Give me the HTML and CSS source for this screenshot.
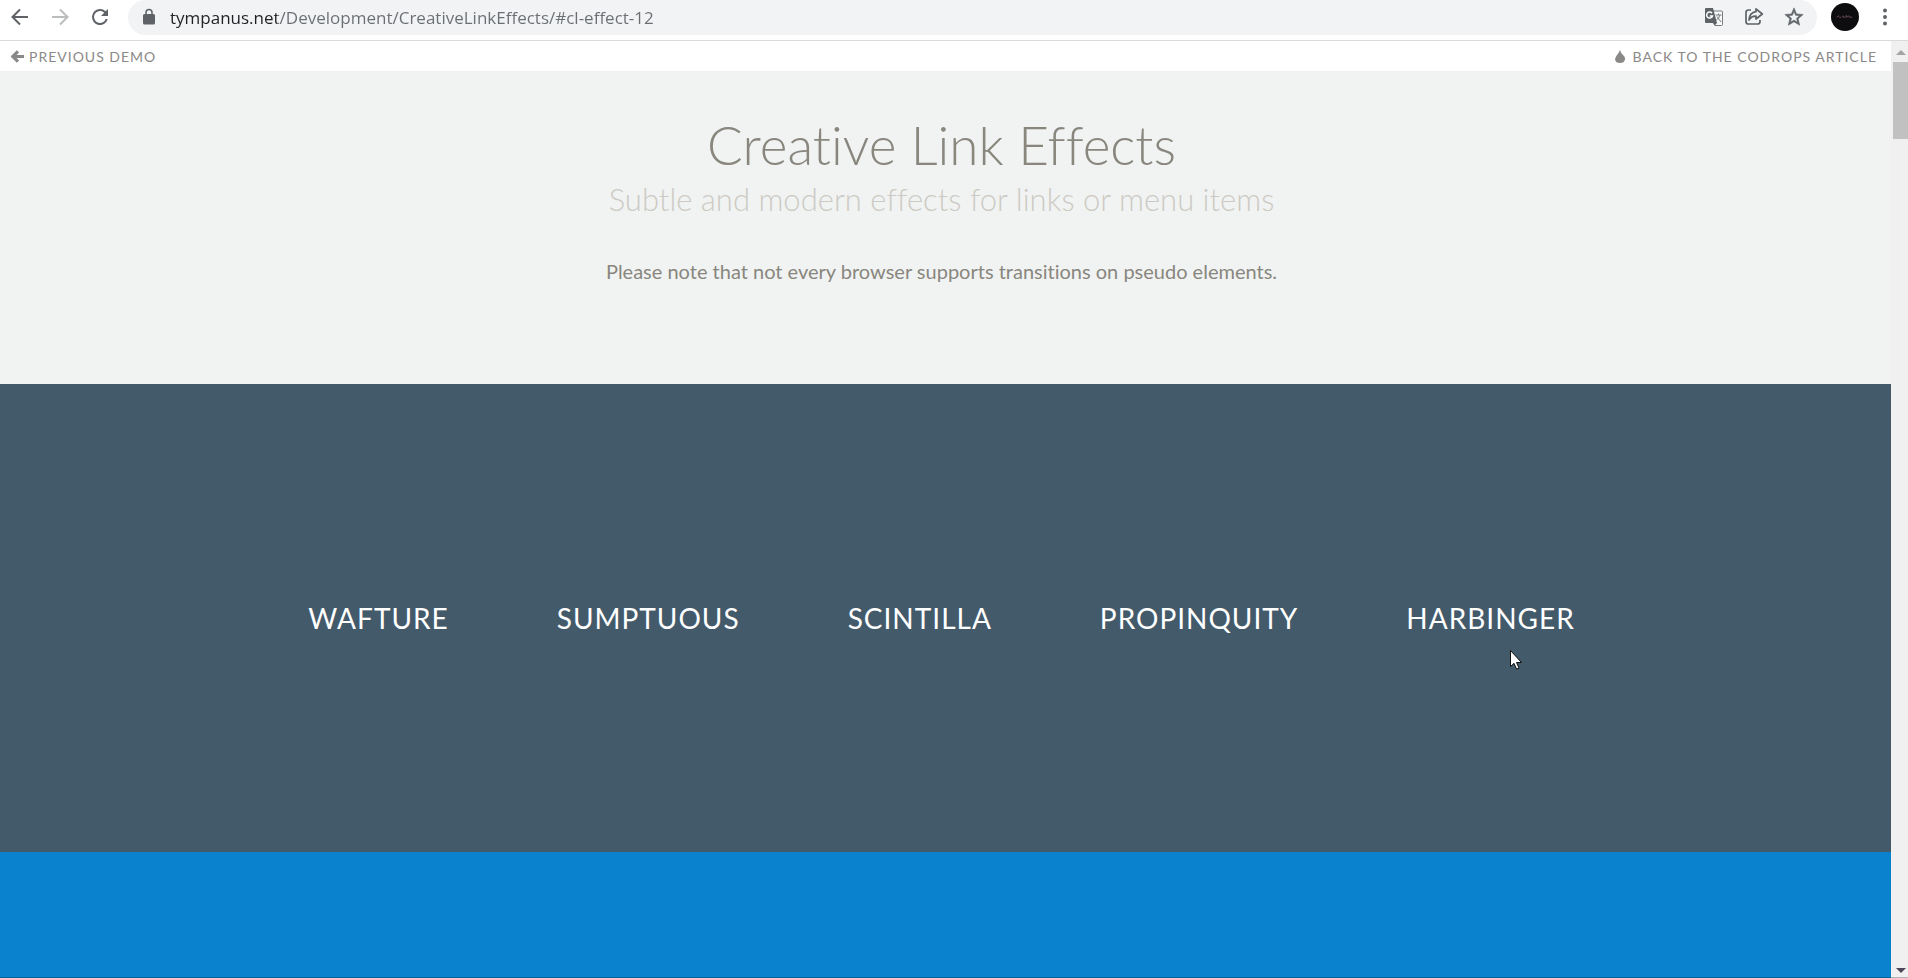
FILE: index.html
```html
<!DOCTYPE html>
<html lang="en">
<head>
    <meta charset="UTF-8">
    <meta name="viewport" content="width=device-width, initial-scale=1.0">
    <title>Creative Link Effects</title>
    <link rel="stylesheet" href="styles.css">
</head>
<body>

    <div class="toolbar">
        <button class="tool" aria-label="Back">
            <svg width="24" height="24" viewBox="0 0 24 24"><path d="M20 12H5M12 4.500L4.500 12l7.500 7.500" fill="none" stroke="#5f6368" stroke-width="2"/></svg>
        </button>
        <button class="tool" aria-label="Forward" disabled>
            <svg width="24" height="24" viewBox="0 0 24 24"><path d="M4 12h15M12 4.500l7.500 7.500-7.500 7.500" fill="none" stroke="#babcbe" stroke-width="2"/></svg>
        </button>
        <button class="tool" aria-label="Reload">
            <svg width="24" height="24" viewBox="0 0 24 24"><path d="M17.650 6.350A7.958 7.958 0 0 0 12 4a8 8 0 1 0 7.730 10h-2.080A6 6 0 1 1 12 6c1.660 0 3.140.690 4.220 1.780L13 11h7V4z" fill="#5f6368"/></svg>
        </button>
        <div class="address">
            <svg class="lock" width="18" height="18" viewBox="0 0 24 24"><path d="M18 8h-1V6A5 5 0 0 0 7 6v2H6a2 2 0 0 0-2 2v10a2 2 0 0 0 2 2h12a2 2 0 0 0 2-2V10a2 2 0 0 0-2-2zM9 6a3 3 0 0 1 6 0v2H9z" fill="#5f6368"/></svg>
            <input class="url" type="text" aria-label="Address" value="tympanus.net/Development/CreativeLinkEffects/#cl-effect-12">
            <button class="tool" aria-label="Translate this page">
                <svg width="20" height="20" viewBox="0 0 20 20">
                    <path d="M9 4h8.500q1 0 1 1v12.500q0 1-1 1H11l-2-3" fill="#f8f9fa" stroke="#777a7e"/>
                    <path d="M11.500 8h6M14.500 6.500V8M16 8q-.8 3-4 5.500M13 9.500l4 5.500" fill="none" stroke="#777a7e"/>
                    <path d="M2 1h7l4 15H2q-1 0-1-1V2q0-1 1-1z" fill="#5f6368"/>
                    <path d="M8 6.200A3 3 0 1 0 8.500 9H5.800" fill="none" stroke="#fff" stroke-width="1.500"/>
                    <path d="M9.500 16H13l-2.200 2.500z" fill="#5f6368"/>
                </svg>
            </button>
            <button class="tool" aria-label="Share this page">
                <svg width="20" height="20" viewBox="0 0 20 20"><path d="M7 3H4.500Q2 3 2 5.500v9Q2 17 4.500 17h9q2.500 0 2.500-2.500V13M12 1.800L18.300 7 12 12V9.200Q7.500 9 5 13q.5-7.500 7-8.300z" fill="none" stroke="#5f6368" stroke-width="1.700" stroke-linejoin="round"/></svg>
            </button>
            <button class="tool" aria-label="Bookmark this page">
                <svg width="22" height="22" viewBox="0 0 24 24"><path d="M22 9.240l-7.190-.620L12 2 9.190 8.630 2 9.240l5.460 4.730L5.820 21 12 17.270 18.180 21l-1.630-7.030zM12 15.400l-3.760 2.270 1-4.280-3.320-2.880 4.380-.380L12 6.100l1.710 4.040 4.380.380-3.320 2.880 1 4.280z" fill="#5f6368" stroke="#5f6368" stroke-width=".6"/></svg>
            </button>
        </div>
        <button class="avatar" aria-label="Profile">
            <svg width="28" height="28" viewBox="0 0 28 28"><circle cx="14" cy="14" r="14" fill="#0d0d0f"/><path d="M5.500 14.500q2-3 2.500-1t2 .5M11 14.500q1.500-3 1.500-1t2 .3l1-1.500.3 2 2-1.500.5 1.500 3-.3" fill="none" stroke="#765060" stroke-width=".8"/></svg>
        </button>
        <button class="tool menu" aria-label="Menu">
            <svg width="24" height="24" viewBox="0 0 24 24" fill="#5f6368"><circle cx="12" cy="5.500" r="2"/><circle cx="12" cy="12" r="2"/><circle cx="12" cy="18.500" r="2"/></svg>
        </button>
    </div>

    <div class="window">
        <div class="page">
            <div class="codrops-top">
                <a href="#previous">
                    <svg width="13" height="13" viewBox="0 0 13 13"><path d="M7 1.300L1.800 6.500 7 11.700M2.500 6.500H13" fill="none" stroke="#8b8987" stroke-width="3.200"/></svg>
                    Previous Demo
                </a>
                <a href="#article">
                    <svg width="10" height="13" viewBox="0 0 10 13"><path d="M5 0Q5.500 2.500 8 5t2 4.500Q9.200 13 5 13T0 9.500Q0 7.500 2 5t3-5z" fill="#8b8987"/></svg>
                    Back to the Codrops Article
                </a>
            </div>
            <header class="intro">
                <h1>Creative Link Effects</h1>
                <h2>Subtle and modern effects for links or menu items</h2>
                <p>Please note that not every browser supports transitions on pseudo elements.</p>
            </header>
            <section class="effects">
                <nav>
                    <a href="#wafture">Wafture</a>
                    <a href="#sumptuous">Sumptuous</a>
                    <a href="#scintilla">Scintilla</a>
                    <a href="#propinquity">Propinquity</a>
                    <a href="#harbinger">Harbinger</a>
                </nav>
                <svg class="pointer" width="13" height="20" viewBox="0 0 13 20"><path d="M.5.5v16l3.500-3.200 2.500 5.800 2.500-1-2.500-5.600h5z" fill="#fff" stroke="#111"/></svg>
            </section>
            <section class="next"></section>
        </div>
        <div class="scrollbar">
            <svg width="10" height="5" viewBox="0 0 10 5"><path d="M0 5l5-5 5 5z" fill="#a3a3a3"/></svg>
            <div class="thumb"></div>
            <svg width="10" height="5" viewBox="0 0 10 5"><path d="M0 0l5 5 5-5z" fill="#50465a"/></svg>
        </div>
    </div>

</body>
</html>
```

FILE: styles.css
```css
* { box-sizing: border-box; }
body { margin: 0; height: 100vh; display: flex; flex-direction: column; overflow: hidden; background: #fff; font-family: Lato, sans-serif; font-variant-ligatures: none; }
a { text-decoration: none; }
svg { display: block; flex: none; }
button { padding: 0; border: 0; background: none; cursor: pointer; }

/* browser toolbar */
.toolbar { display: flex; align-items: center; gap: 16px; height: 41px; padding: 0 11px 6px 8px; border-bottom: 1px solid #d9dadc; }
.tool { display: flex; align-items: center; justify-content: center; width: 24px; height: 24px; }
.address { flex: 1; display: flex; align-items: center; gap: 16px; height: 35px; padding: 0 11px 0 12px; background: #f1f3f4; border-radius: 18px; }
.url { flex: 1; min-width: 0; padding: 0; border: 0; outline: 0; font: 17px "Open Sans", sans-serif; color: transparent; background: linear-gradient(90deg, #202124 107px, #6b6e73 107px); background-clip: text; -webkit-background-clip: text; }
.lock { margin-right: -4px; }
.avatar { margin-left: -2px; }
.menu { margin-left: -2px; }

.window { flex: 1; display: flex; min-height: 0; }
.page { flex: 1; display: flex; flex-direction: column; min-width: 0; }

.codrops-top { display: flex; justify-content: space-between; height: 30px; padding: 0 14px 0 11px; }
.codrops-top a { display: flex; align-items: center; gap: 5px; color: #8b8987; font-size: 14px; letter-spacing: 1px; text-transform: uppercase; }
.codrops-top a + a { gap: 8px; }

.intro { padding: 42px 8px 98px 0; background: #f0f3f2; color: #89867e; text-align: center; }
.intro h1 { margin: 0; font-size: 53px; line-height: 64px; font-weight: 300; }
.intro h2 { margin: 0; font-size: 31px; line-height: 45px; font-weight: 300; color: #cdcac4; }
.intro p { margin: 35px 0 0; font-size: 20px; line-height: 29px; }

.effects { position: relative; padding: 218px 8px 218px 0; background: #435a6b; }
.effects nav { display: flex; justify-content: center; gap: 108px; }
.effects a { color: #fff; font-size: 28px; line-height: 32px; letter-spacing: 1px; text-transform: uppercase; }
.pointer { position: absolute; left: 1510px; top: 266px; }
.next { flex: 1; background: #0b82cd; border-bottom: 1px solid #086199; }

.scrollbar { display: flex; flex-direction: column; align-items: center; width: 17px; padding: 9px 0 4px 2px; background: #f0f0f0; border-bottom: 1px solid #b5b5b5; }
.thumb { width: 100%; height: 77px; margin: 7px 0 auto; background: #c1c1c1; }
```
